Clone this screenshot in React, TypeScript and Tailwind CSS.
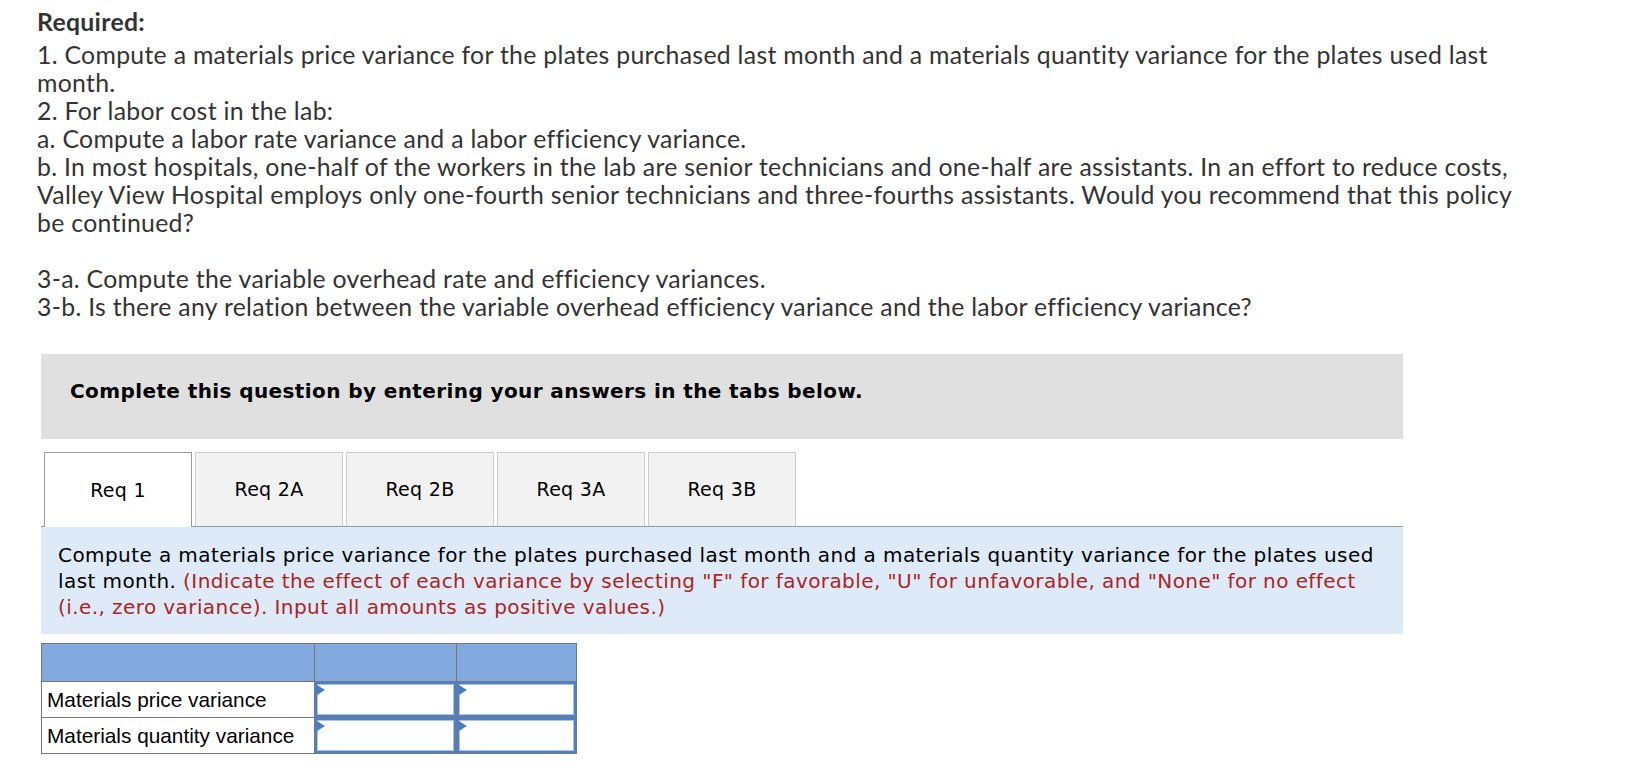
import React from "react";

const topFont = { fontFamily: "Lato, 'Liberation Sans', sans-serif" };

function InputCell() {
  return (
    <td className="border border-[#777777] p-0 bg-white">
      <div className="relative h-[35px] border-2 border-[#4f80c6] bg-white shadow-[inset_0_0_0_1px_#a9c3ea]">
        <div className="absolute left-0 top-[1px] w-0 h-0 border-t-[5px] border-b-[5px] border-l-[8px] border-t-transparent border-b-transparent border-l-[#4a7cc0]" />
      </div>
    </td>
  );
}

export default function App() {
  return (
    <div className="w-[1648px] h-[768px] bg-white overflow-hidden">
      <div
        className="pl-[37px] pt-[8px] text-[24.8px] tracking-[0.3px] leading-[28px] text-[#333333] whitespace-nowrap"
        style={topFont}
      >
        <div className="font-bold mb-[5px]">Required:</div>
        <div>1. Compute a materials price variance for the plates purchased last month and a materials quantity variance for the plates used last</div>
        <div>month.</div>
        <div>2. For labor cost in the lab:</div>
        <div>a. Compute a labor rate variance and a labor efficiency variance.</div>
        <div>b. In most hospitals, one-half of the workers in the lab are senior technicians and one-half are assistants. In an effort to reduce costs,</div>
        <div>Valley View Hospital employs only one-fourth senior technicians and three-fourths assistants. Would you recommend that this policy</div>
        <div>be continued?</div>
        <div className="h-[28px]" />
        <div>3-a. Compute the variable overhead rate and efficiency variances.</div>
        <div>3-b. Is there any relation between the variable overhead efficiency variance and the labor efficiency variance?</div>
      </div>

      <div className="ml-[41px] w-[1362px] mt-[33px]" style={{ fontFamily: "'DejaVu Sans', Verdana, sans-serif" }}>
        <div className="h-[85px] bg-[#e0e0e0] pl-[29px] pt-[24px] text-[20px] tracking-[0.4px] leading-[26px] font-bold text-black whitespace-nowrap">
          Complete this question by entering your answers in the tabs below.
        </div>

        <div className="mt-[13px] flex items-end border-b border-[#999999] pl-[3px] gap-[3px] h-[75px]">
          <div className="w-[148px] h-[75px] -mb-px bg-white border border-b-0 border-[#999999] flex items-center justify-center text-[19px] tracking-[0.3px] text-black">
            Req 1
          </div>
          {["Req 2A", "Req 2B", "Req 3A", "Req 3B"].map((t) => (
            <div
              key={t}
              className="w-[148px] h-[74px] bg-[#f2f2f2] border border-b-0 border-[#cccccc] flex items-center justify-center text-[19px] tracking-[0.3px] text-black"
            >
              {t}
            </div>
          ))}
        </div>

        <div className="h-[107px] bg-[#deeaf7] pl-[17px] pt-[15px] text-[20px] tracking-[0.42px] leading-[26px] text-black whitespace-nowrap">
          <div>Compute a materials price variance for the plates purchased last month and a materials quantity variance for the plates used</div>
          <div>
            last month. <span className="text-[#ab2424]">(Indicate the effect of each variance by selecting "F" for favorable, "U" for unfavorable, and "None" for no effect</span>
          </div>
          <div className="text-[#ab2424]">(i.e., zero variance). Input all amounts as positive values.)</div>
        </div>
      </div>

      <table
        className="ml-[41px] mt-[9px] border-collapse border border-[#777777] text-[20.8px] text-black"
        style={{ fontFamily: "'Liberation Sans', Arial, sans-serif" }}
      >
        <thead>
          <tr className="h-[38px] bg-[#82aadf]">
            <th className="w-[273px] border border-[#777777]" />
            <th className="w-[142px] border border-[#777777]" />
            <th className="w-[120px] border border-[#777777]" />
          </tr>
        </thead>
        <tbody>
          <tr className="h-[36px]">
            <td className="border border-[#777777] pl-[5px] whitespace-nowrap">Materials price variance</td>
            <InputCell />
            <InputCell />
          </tr>
          <tr className="h-[36px]">
            <td className="border border-[#777777] pl-[5px] whitespace-nowrap">Materials quantity variance</td>
            <InputCell />
            <InputCell />
          </tr>
        </tbody>
      </table>
    </div>
  );
}
